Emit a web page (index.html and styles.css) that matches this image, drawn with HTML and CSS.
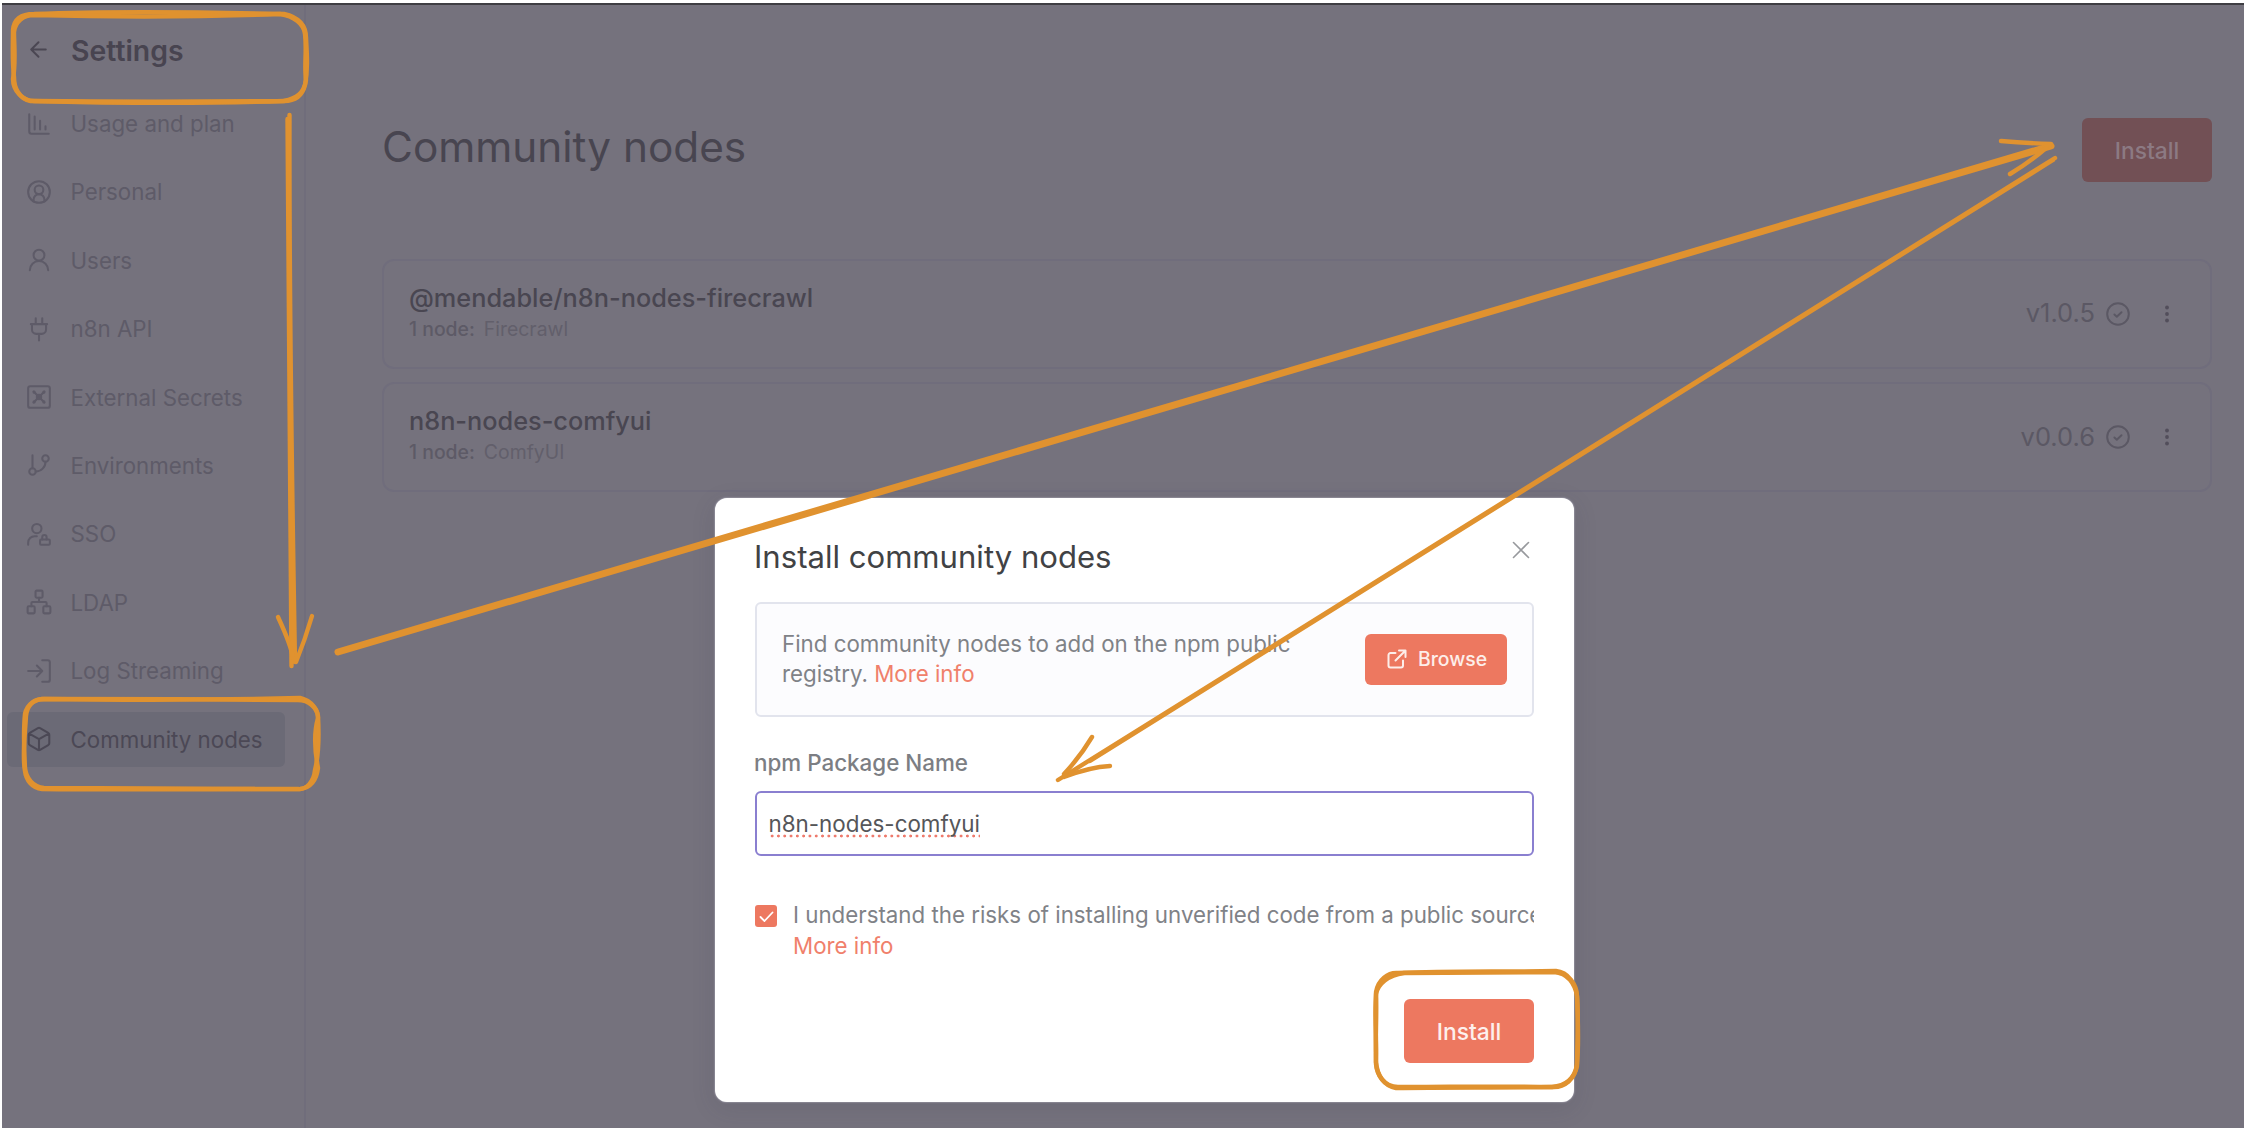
FILE: index.html
```html
<!DOCTYPE html>
<html lang="en">
<head>
<meta charset="utf-8">
<title>Community nodes</title>
<link rel="stylesheet" href="styles.css">
</head>
<body>
<div class="app">
  <nav class="sidebar">
    <div class="side-head">
      <svg class="icon back" viewBox="0 0 24 24"><path d="m12 19-7-7 7-7M19 12H5"/></svg>
      <span>Settings</span>
    </div>
    <ul class="menu">
      <li><svg class="icon" viewBox="0 0 24 24"><path d="M3 3v16a2 2 0 0 0 2 2h16M8 5v12M13 9v8M18 14v3"/></svg>Usage and plan</li>
      <li><svg class="icon" viewBox="0 0 24 24"><circle cx="12" cy="12" r="10"/><circle cx="12" cy="10" r="4"/><path d="M7 20.700V19a5 5 0 0 1 10 0v1.700"/></svg>Personal</li>
      <li><svg class="icon" viewBox="0 0 24 24"><circle cx="12" cy="7.500" r="5"/><path d="M3.500 21.500a8.500 8.500 0 0 1 17 0"/></svg>Users</li>
      <li><svg class="icon" viewBox="0 0 24 24"><path d="M12 22.500v-5M9 7.500V2M15 7.500V2M18.500 7.500v5a4 4 0 0 1-4 4h-5a4 4 0 0 1-4-4v-5zM4.500 7.500h15"/></svg>n8n API</li>
      <li><svg class="icon" viewBox="0 0 24 24"><rect x="2" y="2" width="20" height="20" rx="2"/><path d="m7 7 10 10M17 7 7 17"/><circle cx="12" cy="12" r="2"/><circle cx="7.500" cy="7.500" r=".5"/><circle cx="16.500" cy="7.500" r=".5"/><circle cx="7.500" cy="16.500" r=".5"/><circle cx="16.500" cy="16.500" r=".5"/></svg>External Secrets</li>
      <li><svg class="icon" viewBox="0 0 24 24"><path d="M6 3v12M18 9a9 9 0 0 1-9 9"/><circle cx="18" cy="6" r="3"/><circle cx="6" cy="18" r="3"/></svg>Environments</li>
      <li><svg class="icon" viewBox="0 0 24 24"><circle cx="10" cy="7" r="4.300"/><path d="M2 22v-2a6 6 0 0 1 6-6h2M15 17v-2a2 2 0 0 1 4 0v2"/><rect x="13" y="17" width="9" height="5" rx=".9"/></svg>SSO</li>
      <li><svg class="icon" viewBox="0 0 24 24"><rect x="16" y="16" width="6.500" height="6.500" rx="1"/><rect x="1.500" y="16" width="6.500" height="6.500" rx="1"/><rect x="8.800" y="1.500" width="6.500" height="6.500" rx="1"/><path d="M5 16v-3a1 1 0 0 1 1-1h12a1 1 0 0 1 1 1v3M12 12V8"/></svg>LDAP</li>
      <li><svg class="icon" viewBox="0 0 24 24"><path d="m10 17 5-5-5-5M15 12H2M15 2h5a2 2 0 0 1 2 2v16a2 2 0 0 1-2 2h-5"/></svg>Log Streaming</li>
      <li class="active"><svg class="icon" viewBox="0 0 24 24"><path d="M21.500 8a2 2 0 0 0-1-1.730l-7.500-4.300a2 2 0 0 0-2 0l-7.500 4.300A2 2 0 0 0 2.500 8v8a2 2 0 0 0 1 1.730l7.500 4.300a2 2 0 0 0 2 0l7.500-4.300a2 2 0 0 0 1-1.730ZM3 7l9 5.200L21 7M12 22V12"/></svg>Community nodes</li>
    </ul>
  </nav>
  <main class="content">
    <header class="page-head">
      <h1>Community nodes</h1>
      <div class="btn btn-dim">Install</div>
    </header>
    <section class="cards">
      <article class="card">
        <div class="info"><h2>@mendable/n8n-nodes-firecrawl</h2><p><b>1 node:</b>Firecrawl</p></div>
        <span class="version">v1.0.5</span>
        <svg class="ok" viewBox="0 0 24 24"><circle cx="12" cy="12" r="10.800"/><path d="m8.400 12.500 2.400 2.200 4.700-4.500"/></svg>
        <svg class="dots" viewBox="0 0 6 20"><circle cx="3" cy="3.500" r="1.900"/><circle cx="3" cy="10" r="1.900"/><circle cx="3" cy="16.500" r="1.900"/></svg>
      </article>
      <article class="card">
        <div class="info"><h2>n8n-nodes-comfyui</h2><p><b>1 node:</b>ComfyUI</p></div>
        <span class="version">v0.0.6</span>
        <svg class="ok" viewBox="0 0 24 24"><circle cx="12" cy="12" r="10.800"/><path d="m8.400 12.500 2.400 2.200 4.700-4.500"/></svg>
        <svg class="dots" viewBox="0 0 6 20"><circle cx="3" cy="3.500" r="1.900"/><circle cx="3" cy="10" r="1.900"/><circle cx="3" cy="16.500" r="1.900"/></svg>
      </article>
    </section>
  </main>
</div>

<div class="modal">
  <header class="modal-head">
    <h3>Install community nodes</h3>
    <svg class="close" viewBox="0 0 18 18"><path d="m1.500 1.500 15 15M16.500 1.500l-15 15"/></svg>
  </header>
  <div class="notice">
    <p>Find community nodes to add on the npm public<br>registry. <a>More info</a></p>
    <div class="browse">
      <svg viewBox="0 0 20 20"><path d="M12 1.500h6.500V8M18.500 1.500 8.500 11.500M8.500 4H3.500A2 2 0 0 0 1.500 6v10.500a2 2 0 0 0 2 2H14a2 2 0 0 0 2-2V11.500"/></svg>
      Browse
    </div>
  </div>
  <div class="label">npm Package Name</div>
  <div class="field"><span>n8n-nodes-comfyui</span></div>
  <div class="consent">
    <div class="check"><svg viewBox="0 0 22 22"><path d="m5.500 12 4 4 8-8.500"/></svg></div>
    <p>I understand the risks of installing unverified code from a public source.<br><a>More info</a></p>
  </div>
  <div class="modal-foot"><div class="btn">Install</div></div>
</div>

<svg class="marks" viewBox="0 0 2244 1128">
  <!-- Settings frame -->
  <path d="M34 14C110 11 200 12 284 14C297 17 306 24 306 38C307 55 308 70 305 85C302 97 295 101 284 101C200 104 110 103 30 101C19 98 14 88 14 77C12 60 13 44 13 30C14 19 22 14 34 14Z"/>
  <path d="M34 15C110 17 200 17 280 14C294 16 304 24 305 34C307 50 304 66 306 80C304 94 296 98 284 101C200 102 110 102 34 101C22 101 13 90 13 79C16 62 14 45 14 32C15 22 23 15 34 15Z"/>
  <!-- Community nodes frame -->
  <path d="M42 699C120 700 220 700 300 698C312 701 318 710 318 718C313 735 315 752 318 768C316 784 308 788 300 789C210 789 120 790 42 789C32 788 26 780 25 771C22 756 25 735 26 716C27 705 34 700 42 699Z"/>
  <path d="M44 699C120 699 220 699 298 700C309 700 317 708 318 716C319 735 319 754 315 770C314 782 306 790 298 789C210 789 120 789 44 788C33 787 26 778 25 768C24 750 23 733 25 714C27 704 35 699 44 699Z"/>
  <!-- Modal install frame -->
  <path d="M1398 973C1450 971 1500 972 1556 971C1568 972 1577 985 1577 996C1578 1020 1579 1045 1577 1064C1575 1080 1564 1087 1554 1087C1500 1088 1450 1087 1396 1088C1384 1086 1377 1075 1376 1064C1375 1040 1377 1015 1376 992C1378 980 1388 972 1398 973Z"/>
  <path d="M1404 973C1450 973 1500 972 1554 972C1568 973 1575 984 1577 996C1579 1020 1577 1045 1577 1066C1574 1080 1564 1086 1552 1087C1500 1086 1450 1087 1398 1087C1384 1087 1377 1075 1376 1062C1377 1040 1374 1018 1376 994C1378 984 1388 975 1404 973Z"/>
  <!-- Down arrow -->
  <path d="M287.500 119Q289 360 291.500 666M289.500 115Q289 320 295 662"/>
  <path d="M278 617Q291 645 293 658M312 616Q305 640 296 662"/>
  <!-- Arrow to the page install button -->
  <path class="thick" d="M338 652 2051 146"/>
  <path d="M2001 141Q2025 143 2051 144M2010 174Q2030 162 2046 148"/>
  <!-- Arrow to the package field -->
  <path d="M2055 158 1058 780M2053 160 1090 761"/>
  <path d="M1092 737Q1080 757 1064 774M1110 766Q1090 767 1064 777"/>
</svg>
</body>
</html>
```
FILE: styles.css
```css
* { box-sizing: border-box; margin: 0; padding: 0; }
body { width: 2244px; height: 1128px; overflow: hidden; background: #fff; padding: 3px 0 0 2px; font-family: "Inter", sans-serif; position: relative; }
svg { display: block; fill: none; stroke: currentColor; stroke-linecap: round; stroke-linejoin: round; flex: none; }

.app { display: flex; height: 1125px; background: #75727d; border-top: 2px solid #3f3e43; }
.sidebar { width: 304px; border-right: 2px solid #706d7b; padding-top: 17px; }
.side-head { display: flex; align-items: center; height: 58px; padding-left: 24px; gap: 20px; font-size: 28.400px; font-weight: 600; color: #484450; line-height: 58px; }
.icon { width: 26px; height: 26px; stroke-width: 1.900; }
.back { width: 25px; height: 25px; margin-top: -4px; color: #4b4753; }
.menu { list-style: none; padding: 16px 19px 0 5px; display: flex; flex-direction: column; gap: 13.400px; }
.menu li { display: flex; align-items: center; gap: 19px; height: 55px; padding-left: 18.500px; border-radius: 6px; font-size: 22.320px; color: #5e5b68; }
.menu .active { background: #6b6a76; color: #4b4855; }

.content { flex: 1; padding: 113px 32px 0 76px; }
.page-head { display: flex; justify-content: space-between; height: 64px; margin-bottom: 76.500px; }
h1 { font-size: 42.300px; font-weight: 400; line-height: 58px; color: #484550; }
.btn { width: 130px; height: 64px; border-radius: 6px; background: #ed7860; color: #fdf0ed; font-size: 22.800px; font-weight: 500; line-height: 65px; text-align: center; }
.btn-dim { background: #725055; color: #8c7a83; }
.cards { display: flex; flex-direction: column; gap: 13.500px; }
.card { display: flex; align-items: center; height: 110px; border: 2px solid #706d7c; border-radius: 12px; padding: 0 40px 0 25px; }
.info { flex: 1; align-self: flex-start; padding-top: 19px; }
h2 { font-size: 25.300px; font-weight: 500; line-height: 36px; color: #494651; }
.info p { font-size: 19.400px; line-height: 26px; color: #625f6b; }
.info b { font-weight: 500; margin-right: 9px; color: #5d5a66; }
.version { font-size: 25.500px; color: #5b5864; margin: -2px 11px 0 0; }
.ok { width: 24px; height: 24px; color: #5b5864; stroke-width: 2; }
.dots { width: 6px; height: 20px; margin-left: 34px; fill: #524e5b; stroke: none; }

.modal { position: absolute; left: 715px; top: 498px; width: 859px; height: 604px; border-radius: 12px; background: #fff; padding: 35px 40px 0; box-shadow: 0 0 2px #c9c8d6, 0 6px 24px rgba(60, 55, 75, .14); }
.modal-head { display: flex; justify-content: space-between; height: 69px; }
h3 { font-size: 31.100px; font-weight: 400; line-height: 49px; margin-left: -1px; color: #414244; }
.close { width: 18px; height: 18px; margin: 8px 4px 0 0; color: #97999d; stroke-width: 1.600; }
.notice { display: flex; justify-content: space-between; align-items: center; height: 115px; border: 2px solid #e2e4ed; border-radius: 6px; background: #fcfcfe; padding: 0 25px; }
p { font-size: 22.300px; line-height: 30px; color: #7f8287; }
a { color: #f0806b; }
.notice p { line-height: 29.300px; margin-top: -2px; }
.browse { display: flex; align-items: center; gap: 11px; width: 142px; height: 51px; padding: 0 0 1px 22px; border-radius: 6px; background: #ed7860; color: #fdeeea; font-size: 19.400px; font-weight: 500; }
.browse svg { width: 20px; height: 20px; stroke-width: 2; }
.label { height: 73.500px; padding-top: 31px; margin-left: -1px; font-size: 22.400px; font-weight: 500; line-height: 30px; color: #7c7e83; }
.field { height: 65px; border: 2px solid #8a7fd0; border-radius: 6px; padding: 0 11.500px; font-size: 22.400px; line-height: 61px; color: #555659; }
.field span { padding-bottom: 1px; background: radial-gradient(circle at center, #ee7a6c 1.100px, transparent 1.800px) 0 100% / 6.300px 4px repeat-x; }
.consent { display: flex; gap: 16px; margin-top: 44.500px; overflow: hidden; }
.consent p { white-space: nowrap; line-height: 30.500px; }
.check { width: 22px; height: 22px; margin-top: 5px; border-radius: 3px; background: #ed7860; color: #fff; flex: none; }
.check svg { width: 22px; height: 22px; stroke-width: 1.800; }
.modal-foot { display: flex; justify-content: flex-end; margin-top: 37.500px; }

.marks { position: absolute; left: 0; top: 0; width: 2244px; height: 1128px; color: #e0922f; stroke-width: 4.400; }
.thick { stroke-width: 7; }
```
